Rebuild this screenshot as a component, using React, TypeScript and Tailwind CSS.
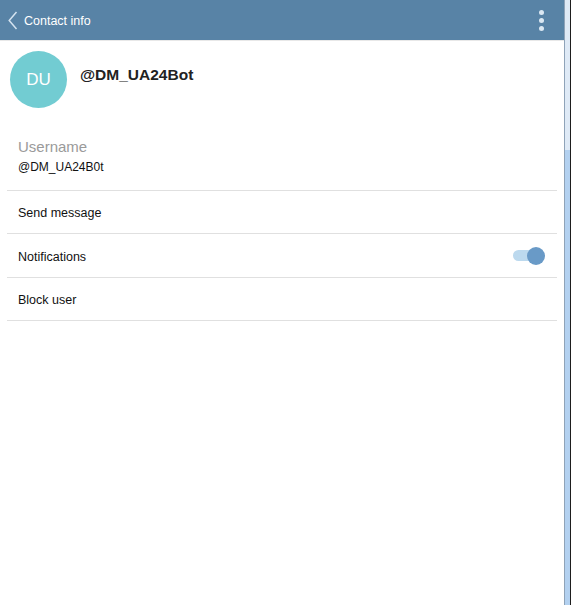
function Row({ label, tall, children }: { label: string; tall?: boolean; children?: React.ReactNode }) {
  return (
    <div className={`flex items-center justify-between ${tall ? 'h-[44px]' : 'h-[43px]'} border-b border-[#e0e0e0] pl-[11px] pr-[12px]`}>
      <span className="text-[12.5px] text-[#111] pt-[3px]">{label}</span>
      {children}
    </div>
  );
}

export default function App() {
  return (
    <div className="flex w-[571px] h-[605px] bg-white" style={{ fontFamily: '"Liberation Sans", Arial, sans-serif' }}>
      <div className="flex flex-col w-[564px] h-full">
        {/* Header */}
        <div className="flex items-center justify-between h-[40px] bg-[#5883a6] pl-[8px] pr-[20px] border-b border-[#e8e8e8] box-content">
          <div className="flex items-center gap-[6px]">
            <svg width="10" height="19" viewBox="0 0 10 19" fill="none">
              <polyline points="8.5,1 1.2,9.5 8.5,18" stroke="#d4e3f0" strokeWidth="1.5" />
            </svg>
            <span className="text-[12.5px] text-white pt-[3px]">Contact info</span>
          </div>
          <div className="flex flex-col gap-[3px]">
            <span className="w-[5px] h-[5px] rounded-full bg-[#dbe8f3]" />
            <span className="w-[5px] h-[5px] rounded-full bg-[#dbe8f3]" />
            <span className="w-[5px] h-[5px] rounded-full bg-[#dbe8f3]" />
          </div>
        </div>

        {/* Profile */}
        <div className="flex items-start pl-[10px] pt-[10px]">
          <div className="w-[57px] h-[57px] rounded-full bg-[#72ccd2] flex items-center justify-center text-white text-[17px]">
            DU
          </div>
          <div className="ml-[13px] mt-[12px] text-[15.5px] font-bold text-[#222]">@DM_UA24Bot</div>
        </div>

        <div className="mx-[7px] mt-[30px]">
          <div className="pl-[11px] pb-[15px] border-b border-[#e0e0e0]">
            <div className="text-[15px] text-[#9a9a9a] leading-[18px]">Username</div>
            <div className="text-[12px] text-[#111] leading-[16px] mt-[3px]">@DM_UA24B0t</div>
          </div>
          <Row label="Send message" />
          <Row label="Notifications" tall>
            <div className="relative w-[32px] h-[18px] flex items-center">
              <div className="w-[22px] h-[11px] rounded-full bg-[#bcd9ee]" />
              <div className="absolute right-0 top-0 w-[18px] h-[18px] rounded-full bg-[#699ac7]" />
            </div>
          </Row>
          <Row label="Block user" />
        </div>
      </div>
      {/* Window edge */}
      <div className="w-[1px] h-full bg-[#8fa3b8]" />
      <div className="w-[5px] h-full flex flex-col">
        <div className="h-[150px] bg-[#dfeaf6]" />
        <div className="flex-1 bg-[#b3d1f0]" />
      </div>
      <div className="w-[1px] h-full bg-[#1e1e1e]" />
    </div>
  );
}
